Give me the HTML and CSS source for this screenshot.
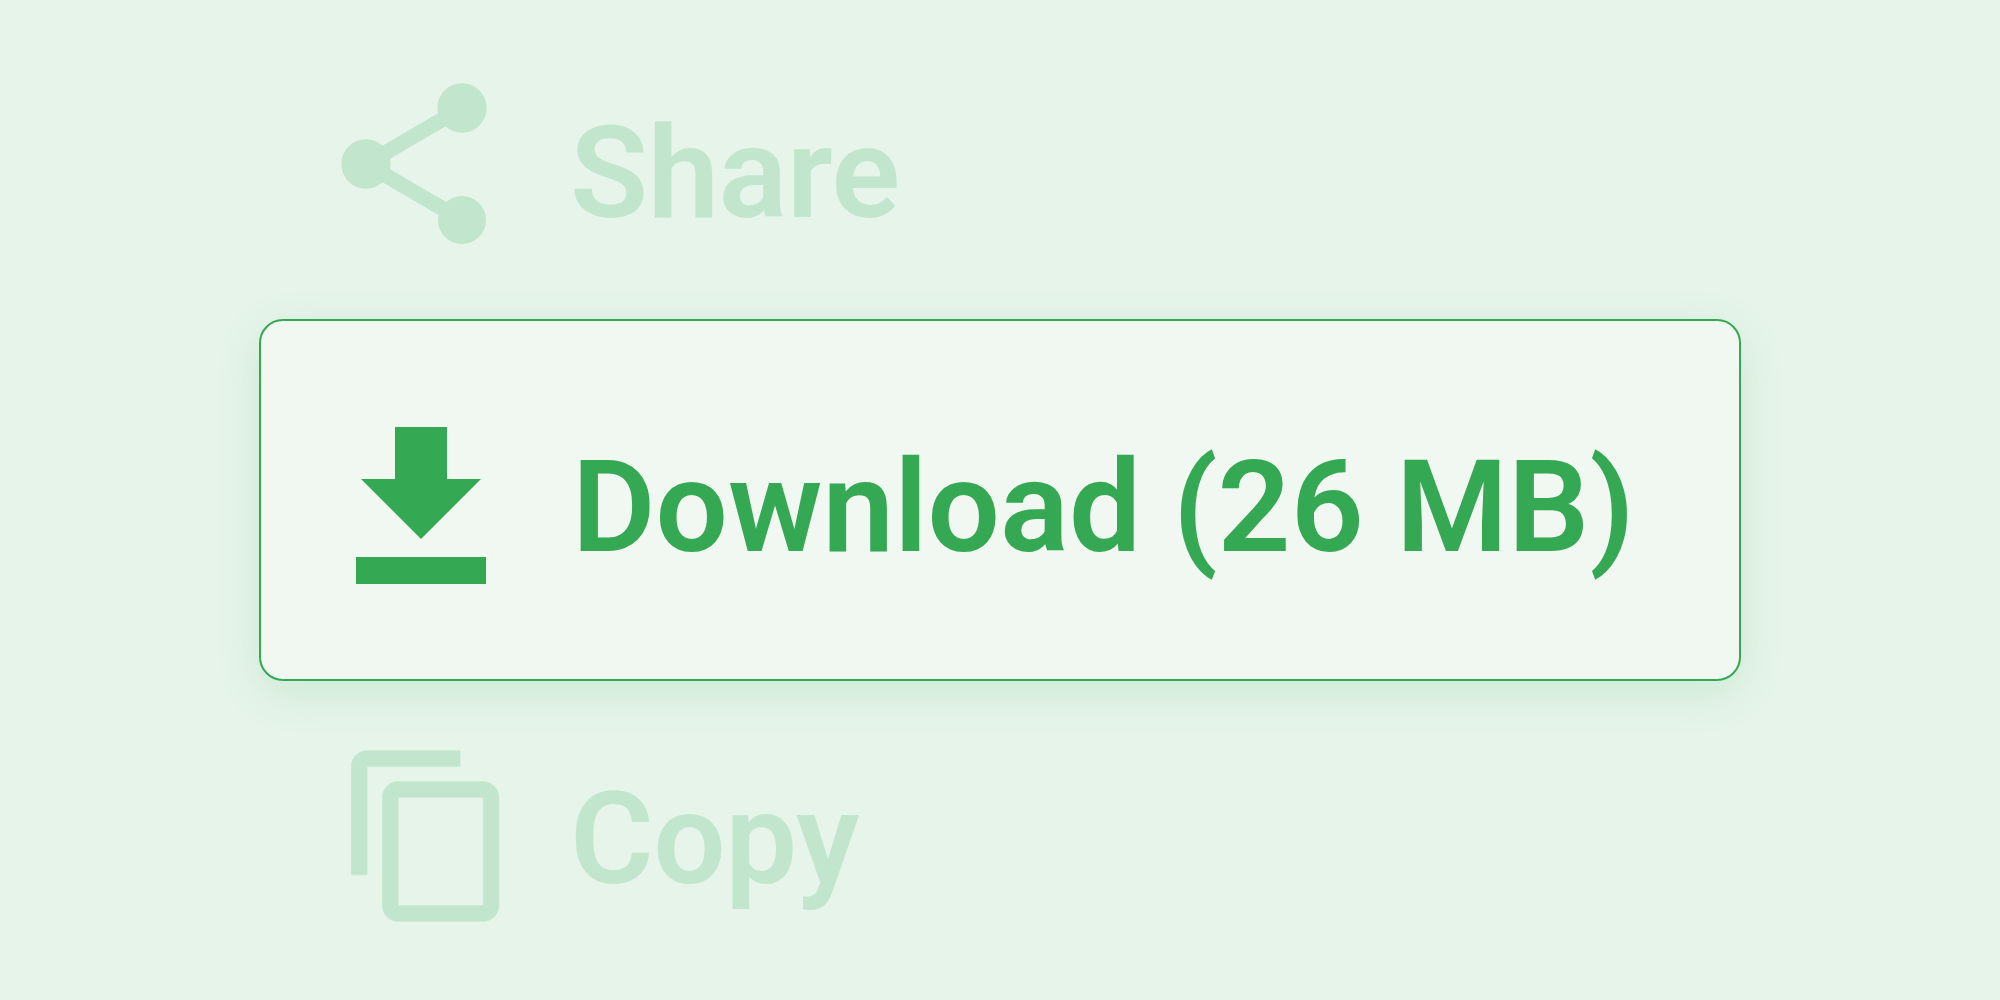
FILE: index.html
```html
<!DOCTYPE html>
<html lang="en">
<head>
<meta charset="utf-8">
<title>Actions</title>
<link rel="stylesheet" href="styles.css">
</head>
<body>
<ul class="menu">
  <li class="row row-share">
    <svg class="icon icon-share" viewBox="0 0 24 24"><path d="M18 16.08c-.76 0-1.44.3-1.96.77L8.91 12.7c.05-.23.09-.46.09-.7s-.04-.47-.09-.7l7.05-4.11c.54.5 1.25.81 2.04.81 1.66 0 3-1.34 3-3s-1.34-3-3-3-3 1.34-3 3c0 .24.04.47.09.7L8.04 9.81C7.5 9.31 6.79 9 6 9c-1.66 0-3 1.34-3 3s1.34 3 3 3c.79 0 1.5-.31 2.04-.81l7.12 4.16c-.05.21-.08.43-.08.65 0 1.61 1.31 2.92 2.92 2.92 1.61 0 2.92-1.31 2.92-2.92s-1.31-2.92-2.92-2.92z"/><path class="share-arms" d="M18 5 6 12l12 7"/></svg>
    <span class="label">Share</span>
  </li>
  <li class="row row-download">
    <svg class="icon icon-download" viewBox="0 0 130 157"><path d="M39 0h52v52h34L65 112 5 52h34zM0 130h130v27H0z"/></svg>
    <span class="label">Download (26 MB)</span>
  </li>
  <li class="row row-copy">
    <svg class="icon icon-copy" viewBox="0 0 24 24"><path d="M16 1H4c-1.1 0-2 .9-2 2v14h2V3h12V1zm3 4H8c-1.1 0-2 .9-2 2v14c0 1.1.9 2 2 2h11c1.1 0 2-.9 2-2V7c0-1.1-.9-2-2-2zm0 16H8V7h11v14z"/></svg>
    <span class="label">Copy</span>
  </li>
</ul>
</body>
</html>
```
FILE: styles.css
```css
* { box-sizing: border-box; }
html, body { height: 100%; }
body {
  margin: 0;
  background: #e6f4ea;
  font-family: Roboto, "Liberation Sans", sans-serif;
  overflow: hidden;
}
.menu {
  list-style: none;
  margin: 0;
  padding: 68px 259px 0;
  display: flex;
  flex-direction: column;
}
.row {
  display: grid;
  grid-template-columns: 313px 1fr;
  align-items: center;
  color: #c2e6cd;
  fill: #c2e6cd;
}
.label {
  font-size: 128px;
  font-weight: 600;
  line-height: 1;
  letter-spacing: -.5px;
  white-space: nowrap;
}
.icon { display: block; }
.row-share { height: 192px; margin-bottom: 59px; }
.row-share .label { padding-top: 18px; margin-left: -2px; }
.icon-share { width: 192px; height: 192px; margin-left: 59px; stroke: #c2e6cd; stroke-width: .16; }
.share-arms { fill: none; stroke-width: 1.6; }
.row-download {
  height: 362px;
  margin-bottom: 62px;
  background: #f1f8f1;
  border: 2px solid #34a853;
  border-radius: 24px;
  box-shadow: 0 12px 44px rgba(52, 168, 83, .14);
  color: #34a853;
  fill: #34a853;
  grid-template-columns: 311px 1fr;
}
.row-download .label { padding-top: 14px; letter-spacing: .1px; }
.icon-download { width: 130px; height: 157px; margin-left: 95px; margin-top: 10px; }
.row-copy { height: 186px; }
.row-copy .label { padding-top: 6px; margin-left: -2px; }
.icon-copy { width: 186px; height: 186px; margin-left: 77px; stroke: #c2e6cd; stroke-width: .1; }
```
